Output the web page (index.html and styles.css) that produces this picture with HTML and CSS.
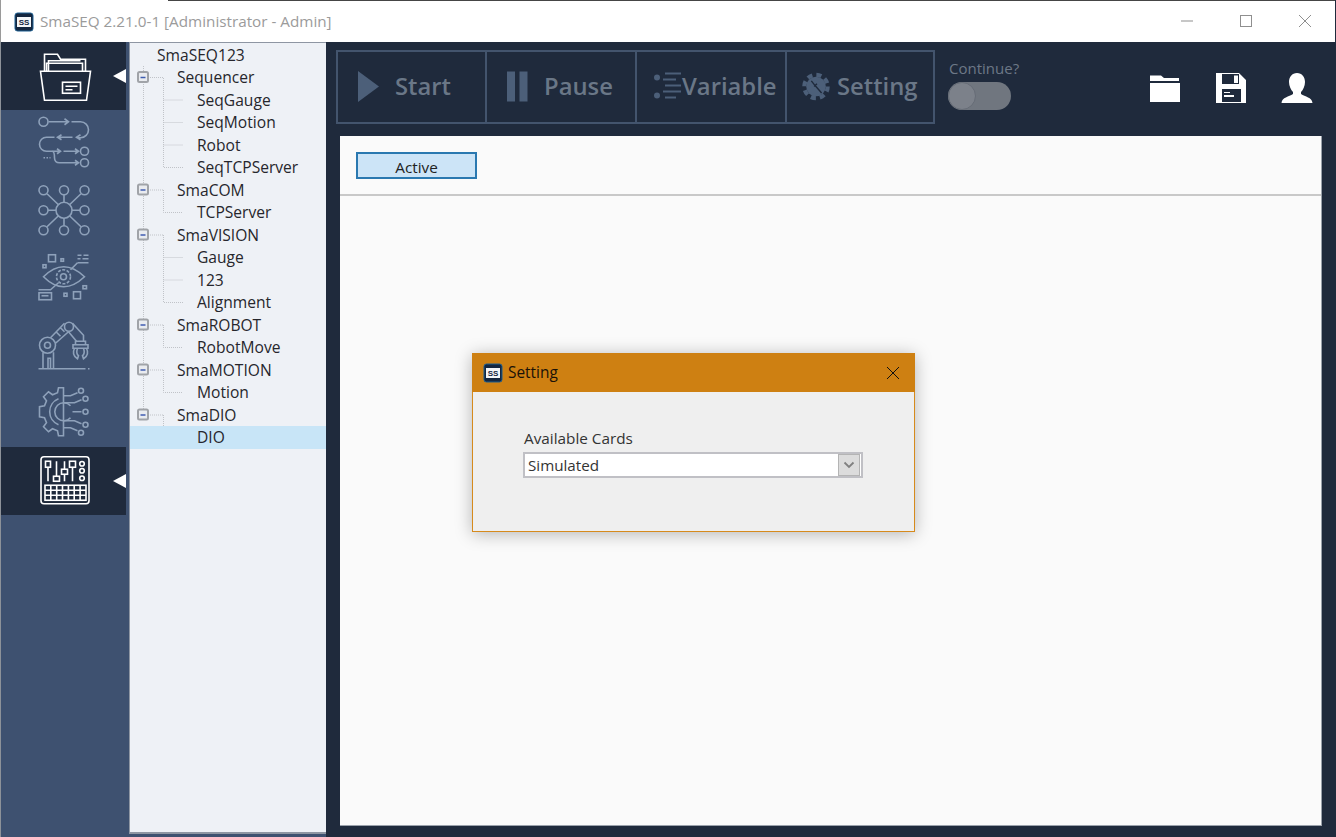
FILE: index.html
```html
<!DOCTYPE html>
<html lang="en">
<head>
<meta charset="utf-8">
<title>SmaSEQ</title>
<link rel="stylesheet" href="styles.css">
</head>
<body>
<div class="window">
  <header class="titlebar">
    <svg class="logo" viewBox="0 0 20 20"><rect x="1" y="1" width="18" height="18" rx="2.5" class="logo-frame"/><rect x="3" y="5" width="14" height="10" class="logo-inner"/><text x="10" y="13" class="logo-text">SS</text></svg>
    <span class="title-text">SmaSEQ 2.21.0-1 [Administrator - Admin]</span>
    <div class="win-controls">
      <svg class="win-btn" viewBox="0 0 14 14"><path d="M1 7H13"/></svg>
      <svg class="win-btn" viewBox="0 0 14 14"><rect x="1.5" y="1.5" width="11" height="11"/></svg>
      <svg class="win-btn" viewBox="0 0 14 14"><path d="M1 1L13 13M13 1L1 13"/></svg>
    </div>
  </header>
  <div class="content-row">
    <div class="left-group">
      <nav class="sidebar">
        <div class="nav-item active">
          <svg class="nav-icon" viewBox="35.5 47.75 56 56"><path d="M44 71V54H57L60 59H85V71"/><path d="M46 71V63H82V71M48 71V60.5H80"/><path d="M40 71H90L86 100H44Z"/><rect x="62" y="82" width="18" height="11"/><path d="M65 86H77M65 89.5H72"/></svg>
        </div>
        <div class="nav-item">
          <svg class="nav-icon" viewBox="35.5 115.25 56 56"><circle cx="43" cy="122" r="4.5"/><path d="M48 122H68M64 119L68 122L64 125"/><path d="M71 122H80A8 8 0 0 1 80 138H76M80 135L76 137.5L80 140"/><path d="M72 137.5H58M61 135L57 137.5L61 140"/><path d="M54 137.5H46A7 7 0 0 0 46 151.5H60M56.500 149L60 151.500L56.500 154"/><path d="M63 151.500H78M74.500 149L78 151.500L74.500 154"/><circle cx="84" cy="151.500" r="4"/><path d="M52 151.500Q54 152 54 158Q54 163 59 163H78M74.500 160.500L78 163L74.500 165.500"/><circle cx="84" cy="163" r="4"/><path d="M43 158H50" stroke-dasharray="1.500 1.500"/></svg>
        </div>
        <div class="nav-item">
          <svg class="nav-icon" viewBox="35.5 182.75 56 56"><circle cx="63.500" cy="210" r="8"/><circle cx="43" cy="190" r="4.500"/><circle cx="63.500" cy="190" r="4.500"/><circle cx="84" cy="190" r="4.500"/><circle cx="43" cy="210" r="4.500"/><circle cx="84" cy="210" r="4.500"/><circle cx="43" cy="230" r="4.500"/><circle cx="63.500" cy="230" r="4.500"/><circle cx="84" cy="230" r="4.500"/><path d="M46.500 193.500L58 204.500M63.500 194.500V202M80.500 193.500L69 204.500M47.500 210H55.500M71.500 210H79.500M46.500 226.500L58 215.500M63.500 225.500V218M80.500 226.500L69 215.500"/></svg>
        </div>
        <div class="nav-item">
          <svg class="nav-icon" viewBox="35.5 250.25 56 56"><rect x="48" y="255" width="7" height="7"/><rect x="60.500" y="259" width="2.500" height="2.500"/><rect x="42.500" y="265" width="3" height="3"/><path d="M77 255.500H81M83 255.500H88M77 259H80M82 259H88M77 263H88"/><path d="M43 277Q63 257 84 277Q63 297 43 277Z"/><circle cx="63" cy="277" r="7" stroke-dasharray="3 1.500"/><circle cx="63" cy="277" r="3"/><path d="M77 263L70 270M38 290H50L58 283"/><rect x="38.500" y="293" width="12.500" height="7"/><path d="M41 296H48"/><rect x="73" y="292" width="7" height="7"/><rect x="63.500" y="293.500" width="3" height="3"/><rect x="82.500" y="286" width="3.500" height="3"/></svg>
        </div>
        <div class="nav-item">
          <svg class="nav-icon" viewBox="35.5 317.75 56 56"><path d="M38 368.500H85M87.500 368.500H89"/><path d="M42.500 368.500V352M53 368.500V352M47.500 368.500V358H50V368.500"/><circle cx="47" cy="345" r="8"/><circle cx="47" cy="345" r="3"/><path d="M50 337.500L64 323M55 343L68 331.500M56 332L60 336M60 327.500L64 331.500"/><circle cx="68.500" cy="326.500" r="4.500"/><path d="M72 323L83 335V341M68 331.500L76 341"/><path d="M75 341H85V344.500H75ZM72.500 344.500H87.500V348H72.500Z"/><path d="M74 348C72 352 73 356 77 358.500L78 355.500C76 354 76 351 77 348M86 348C88 352 87 356 83 358.500L82 355.500C84 354 84 351 83 348"/></svg>
        </div>
        <div class="nav-item">
          <svg class="nav-icon" viewBox="35.5 385.25 56 56"><path d="M63 388H58L57 393L52 395L48 392L43 397L46 401L44 406L39 407V417L44 418L46 423L43 427L48 432L52 429L57 431L58 436H63V388Z"/><path d="M58 399A14 14 0 0 0 58 425"/><path d="M70 406A9 9 0 1 0 70 418"/><path d="M63 396H70L77 393M63 403H74L81 400M72 412H81M63 421H74L81 424M63 428H70L77 431"/><circle cx="80.500" cy="391" r="2.500"/><circle cx="85" cy="399" r="2.500"/><circle cx="85" cy="412" r="2.500"/><circle cx="85" cy="425" r="2.500"/><circle cx="80.500" cy="433" r="2.500"/></svg>
        </div>
        <div class="nav-item active">
          <svg class="nav-icon" viewBox="35.5 452.75 56 56"><rect x="40.500" y="456.500" width="48" height="47" rx="3"/><rect x="45" y="461" width="5" height="6"/><path d="M47.500 467V481M56 461V476"/><rect x="53" y="476" width="6" height="5"/><path d="M64 461V469M64 474V481"/><rect x="61" y="469" width="6" height="5"/><rect x="69" y="461" width="6" height="6"/><path d="M72 467V481"/><circle cx="81.500" cy="463.500" r="2.300"/><circle cx="81.500" cy="470.500" r="2.300"/><circle cx="81.500" cy="478" r="2.300"/><rect x="44.500" y="485" width="41" height="15"/><path d="M44.500 490H85.500M44.500 495H85.500M50.300 485V500M56.200 485V500M62 485V500M67.900 485V500M73.700 485V500M79.600 485V500"/></svg>
        </div>
      </nav>
      <aside class="tree">
        <svg class="tree-lines" viewBox="129 42 197 400">
          <path class="dots" d="M143.500 66V415M148 77.500H163M148 190H163M148 235H163M148 325H163M148 370H163M148 415H163"/>
          <path class="dots" d="M163.500 78V167.500H183M163.500 100H183M163.500 122.500H183M163.500 145H183M163.500 190V212.500H183M163.500 235V302.500H183M163.500 257.500H183M163.500 280H183M163.500 325V347.500H183M163.500 370V392.500H183M163.500 415V437.500H183"/>
          <g class="exp"><rect x="138" y="72" width="10" height="10" rx="1.500"/><path d="M140.500 77.500H145.500"/></g>
          <g class="exp"><rect x="138" y="184.500" width="10" height="10" rx="1.500"/><path d="M140.500 190H145.500"/></g>
          <g class="exp"><rect x="138" y="229.500" width="10" height="10" rx="1.500"/><path d="M140.500 235H145.500"/></g>
          <g class="exp"><rect x="138" y="319.500" width="10" height="10" rx="1.500"/><path d="M140.500 325H145.500"/></g>
          <g class="exp"><rect x="138" y="364.500" width="10" height="10" rx="1.500"/><path d="M140.500 370H145.500"/></g>
          <g class="exp"><rect x="138" y="409.500" width="10" height="10" rx="1.500"/><path d="M140.500 415H145.500"/></g>
        </svg>
        <div class="row lvl0">SmaSEQ123</div>
        <div class="row lvl1">Sequencer</div>
        <div class="row lvl2">SeqGauge</div>
        <div class="row lvl2">SeqMotion</div>
        <div class="row lvl2">Robot</div>
        <div class="row lvl2">SeqTCPServer</div>
        <div class="row lvl1">SmaCOM</div>
        <div class="row lvl2">TCPServer</div>
        <div class="row lvl1">SmaVISION</div>
        <div class="row lvl2">Gauge</div>
        <div class="row lvl2">123</div>
        <div class="row lvl2">Alignment</div>
        <div class="row lvl1">SmaROBOT</div>
        <div class="row lvl2">RobotMove</div>
        <div class="row lvl1">SmaMOTION</div>
        <div class="row lvl2">Motion</div>
        <div class="row lvl1">SmaDIO</div>
        <div class="row lvl2 selected">DIO</div>
      </aside>
    </div>
    <main class="main">
      <div class="toolbar">
        <div class="tool-group">
          <div class="tool start">
            <svg class="tool-icon w21" viewBox="0 0 21 31"><path class="fill" d="M0 0L21 15.500L0 31Z"/></svg>
            <span>Start</span>
          </div>
          <div class="tool pause">
            <svg class="tool-icon w21" viewBox="0 0 21 30"><rect class="fill" width="8" height="30"/><rect class="fill" x="12.500" width="8" height="30"/></svg>
            <span>Pause</span>
          </div>
          <div class="tool variable">
            <svg class="tool-icon w28" viewBox="0 0 28 30"><circle class="fill" cx="3" cy="6" r="3"/><circle class="fill" cx="3" cy="24" r="3"/><path class="line" d="M11 2H27M9 8H22M11 14H27M9 20H27M11 26H22"/></svg>
            <span>Variable</span>
          </div>
          <div class="tool setting">
            <svg class="tool-icon w28" viewBox="0 0 30 30"><circle class="gear-core" cx="15" cy="15" r="10.500"/><circle class="gear-teeth" cx="15" cy="15" r="12.500"/><path class="gear-slash" d="M10 9L14 14L21 22M13 15L16 12"/></svg>
            <span>Setting</span>
          </div>
        </div>
        <div class="continue">
          <div class="continue-label">Continue?</div>
          <div class="toggle"><div class="knob"></div></div>
        </div>
        <div class="right-icons">
          <svg class="right-icon" viewBox="0 0 32 32"><path d="M1 3.500H12L15 6H30V9H1ZM1 11H31V30H1Z"/></svg>
          <svg class="right-icon" viewBox="0 0 32 32"><path fill-rule="evenodd" d="M1 1H24L31 8V31H1ZM7 2V12H24V2ZM19 3.500H23V11H19ZM7 17V30H26V17ZM9 20H15V21H9ZM9 23H19V25H9Z"/></svg>
          <svg class="right-icon" viewBox="0 0 32 32"><path d="M16 1C21 1 24 5 24 10C24 14 22 18 20 20V22C24 25 31 25 31.500 31H.5C1 25 8 25 12 22V20C10 18 8 14 8 10C8 5 11 1 16 1Z"/></svg>
        </div>
      </div>
      <section class="panel">
        <div class="panel-head">
          <div class="active-btn">Active</div>
        </div>
      </section>
    </main>
  </div>
  <div class="dialog">
    <div class="dialog-title">
      <svg class="logo small" viewBox="0 0 20 20"><rect x="1" y="1" width="18" height="18" rx="2.500" class="logo-frame"/><rect x="3" y="5" width="14" height="10" class="logo-inner"/><text x="10" y="13" class="logo-text">SS</text></svg>
      <span class="dialog-name">Setting</span>
      <svg class="dialog-close" viewBox="0 0 14 14"><path d="M1 1L13 13M13 1L1 13"/></svg>
    </div>
    <div class="dialog-body">
      <div class="field-label">Available Cards</div>
      <div class="combo">
        <span class="combo-value">Simulated</span>
        <div class="combo-btn"><svg class="chev" viewBox="0 0 12 8"><path d="M1.500 1.500L6 6L10.500 1.500"/></svg></div>
      </div>
    </div>
  </div>
</div>
</body>
</html>
```

FILE: styles.css
```css
* { box-sizing: border-box; }
html, body { margin: 0; padding: 0; }
body { font-family: "Open Sans", "Noto Sans", sans-serif; background: #1f2a3c; }
.window { position: relative; width: 1336px; height: 837px; display: flex; flex-direction: column; overflow: hidden; background: #1f2a3c; }

.titlebar { height: 42px; flex: none; display: flex; align-items: center; padding: 2px 0 0 13px; margin-right: 1px; border-left: 1px solid #9a9a9a; background: linear-gradient(90deg, #fff 167px, #454545 167px) top / 100% 1px no-repeat, #fff; }
.logo { width: 20px; height: 20px; flex: none; }
.logo-frame { fill: #14263f; stroke: #1c5f92; stroke-width: 1; }
.logo-inner { fill: #f4f6f8; }
.logo-text { font-family: "Liberation Sans", sans-serif; font-size: 8px; font-weight: 700; fill: #14263f; text-anchor: middle; }
.title-text { margin-left: 6px; font-size: 15.25px; line-height: 20px; color: #9b9b9b; white-space: nowrap; position: relative; top: -1px; }
.win-controls { margin-left: auto; display: flex; gap: 45px; margin-right: 23px; position: relative; top: -1px; }
.win-btn { width: 14px; height: 14px; fill: none; stroke: #8f8f8f; stroke-width: 1; }

.content-row { flex: 1; display: flex; min-height: 0; }
.left-group { width: 326px; flex: none; display: flex; background: #3e5170; border-left: 1px solid #8d9299; padding-bottom: 3px; }
.sidebar { width: 128px; flex: none; padding-right: 3px; }
.nav-item { height: 67.5px; display: flex; align-items: center; justify-content: center; position: relative; }
.nav-item.active { background: #1f2a3c; }
.nav-item.active::after { content: ""; position: absolute; right: 0; top: 50%; margin-top: -7px; border-style: solid; border-width: 7px 13px 7px 0; border-color: transparent #fff transparent transparent; }
.nav-icon { width: 56px; height: 56px; fill: none; stroke: #8ea1ba; stroke-width: 1.6; }
.nav-item.active .nav-icon { stroke: #fff; }

.tree { flex: 1; position: relative; background: #eef1f6; border-top: 1px solid #8e96a3; border-left: 1px solid #8e96a3; border-bottom: 2px solid #8e96a3; padding-top: .5px; }
.tree-lines { position: absolute; left: -1px; top: -1px; width: 197px; height: 400px; }
.dots { fill: none; stroke: #c0c3c8; stroke-width: 1; stroke-dasharray: 1 1; }
.exp rect { fill: #e9ebef; stroke: #a0a3a8; stroke-width: 2; }
.exp path { stroke: #3f5db0; stroke-width: 1.5; fill: none; }
.row { height: 22.5px; line-height: 22.5px; font-size: 15.6px; color: #26262c; white-space: nowrap; position: relative; }
.lvl0 { padding-left: 27px; }
.lvl1 { padding-left: 47px; }
.lvl2 { padding-left: 67px; }
.selected { background: #c8e5f7; }

.main { flex: 1; min-width: 0; display: flex; flex-direction: column; padding: 8px 14px 11px 10px; }
.toolbar { height: 74px; flex: none; display: flex; }
.tool-group { display: flex; border: 2px solid #43546d; height: 74px; }
.tool { width: 150px; display: flex; align-items: center; gap: 16px; color: #6a7787; font-size: 23.8px; font-weight: 600; border-right: 2px solid #43546d; padding: 0 0 2px 20px; white-space: nowrap; }
.tool.start { width: 149px; }
.tool.setting { width: 146px; border-right: 0; gap: 7px; padding-left: 15px; }
.tool-icon { flex: none; }
.w21 { width: 21px; height: 31px; }
.w28 { width: 28px; height: 31px; }
.tool.variable { gap: 0; padding-left: 17px; }
.fill { fill: #4c5f79; }
.line { stroke: #4c5f79; stroke-width: 2; fill: none; }
.gear-core { fill: #4c5f79; }
.gear-teeth { fill: none; stroke: #4c5f79; stroke-width: 4.5; stroke-dasharray: 5.500 4.320; }
.gear-slash { fill: none; stroke: #1f2a3c; stroke-width: 1.5; }
.continue { margin-left: 13px; padding-top: 9px; }
.continue-label { font-size: 15px; color: #6d7887; line-height: 19px; white-space: nowrap; padding-left: 1px; }
.toggle { margin-top: 4px; width: 63px; height: 28px; border-radius: 14px; background: #70767f; }
.knob { width: 28px; height: 28px; border-radius: 50%; background: #7c818a; border: 1px solid #666c76; }
.right-icons { margin-left: auto; display: flex; gap: 34px; padding-top: 22px; margin-right: 9px; }
.right-icon { width: 32px; height: 32px; fill: #fff; }

.panel { flex: 1; margin: 12px 0 0 4px; background: #fafafa; border-right: 1px solid #9aa1ab; border-bottom: 1px solid #9aa1ab; }
.panel-head { height: 60px; border-bottom: 2px solid #c8c8c8; padding: 16px 0 0 16px; }
.active-btn { width: 121px; height: 27px; background: #cce4f7; border: 2px solid #2a78b0; color: #222; font-size: 15.3px; line-height: 27px; text-align: center; }

.dialog { position: absolute; left: 472px; top: 353px; width: 443px; height: 179px; background: #efefef; border: 1.5px solid #d68a1c; border-top: 0; box-shadow: 0 2px 16px rgba(0, 0, 0, .28); display: flex; flex-direction: column; }
.dialog-title { height: 39px; flex: none; margin: 0 -1px; background: #ce8012; display: flex; align-items: center; padding-left: 10.5px; }
.dialog-name { margin-left: 5.5px; font-size: 15.4px; line-height: 20px; color: #1a1208; }
.dialog-close { width: 14px; height: 14px; margin-left: auto; margin-right: 15px; fill: none; stroke: #111; stroke-width: 1; }
.dialog-body { padding: 36px 0 0 50px; }
.field-label { font-size: 15.3px; line-height: 20px; color: #333; padding-left: 1px; }
.combo { margin-top: 4px; width: 340px; height: 26px; background: #fff; border: 2px solid #c0c0c5; display: flex; align-items: center; padding: 0 1px 0 3px; }
.combo-value { font-size: 15.2px; color: #333; }
.combo-btn { margin-left: auto; width: 22px; height: 22px; background: #dcdcdc; border: 1px solid #b4b4b4; display: flex; align-items: center; justify-content: center; }
.chev { width: 12px; height: 8px; fill: none; stroke: #808080; stroke-width: 1.8; }
```
